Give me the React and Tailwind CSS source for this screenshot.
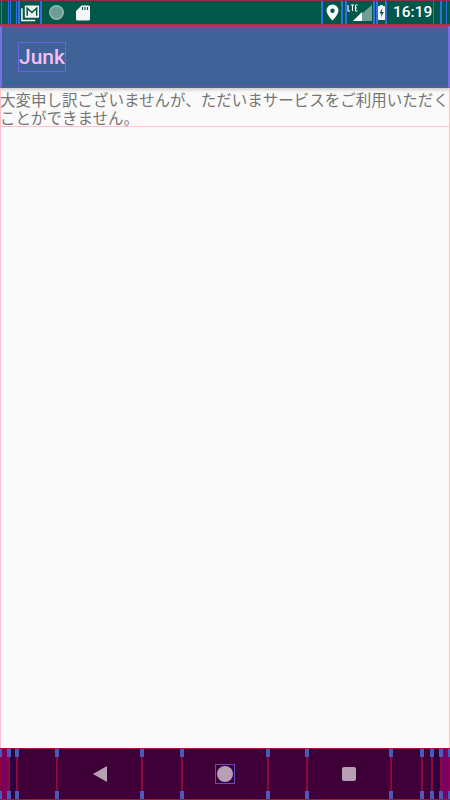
const JP = { fontFamily: '"Noto Sans CJK JP", Roboto, sans-serif' };

function Box({ className = "", children }) {
  return (
    <div className={`relative flex h-full shrink-0 items-center justify-center border-[#2f6fe0] ${className}`}>
      {children}
    </div>
  );
}

function NavCell({ className = "", children, fill = "" }) {
  return (
    <div className={`relative flex h-full shrink-0 items-center justify-center border-x border-[#8a0a3c] ${fill} ${className}`}>
      <span className="absolute -left-px top-0 h-[8px] w-[2px] bg-[#4a5ab8]" />
      <span className="absolute -left-px bottom-0 h-[8px] w-[2px] bg-[#4a5ab8]" />
      <span className="absolute -right-px top-0 h-[8px] w-[2px] bg-[#4a5ab8]" />
      <span className="absolute -right-px bottom-0 h-[8px] w-[2px] bg-[#4a5ab8]" />
      {children}
    </div>
  );
}

export default function App() {
  return (
    <div className="flex h-[800px] w-[450px] flex-col overflow-hidden bg-[#fafafa]" style={JP}>
      <header className="flex h-[26px] shrink-0 items-stretch border-b-2 border-t border-b-[#b03050] border-t-[#8a3040] bg-[#02564a] text-white">
        <Box className="ml-[1px] w-[8px] border-x" />
        <Box className="ml-[1px] w-[7px] border-x" />
        <Box className="ml-[1px] w-[24px] border-x-2">
          <svg width="19" height="18" viewBox="0 0 20 18">
            <path d="M1 4v13h14" fill="none" stroke="#f2f2f2" strokeWidth="1.6" />
            <rect x="4" y="1" width="15" height="13" rx="1" fill="#f2f2f2" />
            <path d="M6.5 12V4l5 4.500 5-4.500v8" fill="none" stroke="#02564a" strokeWidth="1.6" />
          </svg>
        </Box>
        <div className="flex flex-1 items-center pl-[7px]">
          <svg width="15" height="15" viewBox="0 0 15 15">
            <circle cx="7.500" cy="7.500" r="7.500" fill="#8fb5ad" />
            <circle cx="7.500" cy="7.500" r="5.800" fill="#6c9d94" />
          </svg>
          <svg className="ml-[12px]" width="14" height="16" viewBox="0 0 14 16">
            <path d="M5.500 0.500h7a1.500 1.500 0 0 1 1.500 1.500v12a1.500 1.500 0 0 1-1.500 1.500H1.500a1.500 1.500 0 0 1-1.500-1.500V6z" fill="#f5f5f5" />
            <path d="M6.500 2v3M9 2v3M11.500 2v3" stroke="#02564a" strokeWidth="1.200" />
          </svg>
        </div>
        <Box className="w-[22px] border-x-2">
          <svg width="13" height="17" viewBox="0 0 13 17">
            <path fillRule="evenodd" d="M6.500 0.500a6 6 0 0 1 6 6c0 4-6 10-6 10s-6-6-6-10a6 6 0 0 1 6-6zm0 4a2.200 2.200 0 1 0 0 4.400 2.200 2.200 0 0 0 0-4.400z" fill="#fff" />
          </svg>
        </Box>
        <Box className="ml-[2px] w-[30px] border-x-2">
          <svg width="26" height="18" viewBox="0 0 26 18">
            <path d="M25 1v16H6z" fill="#6f9f96" />
            <path d="M11 12v5H6z" fill="#fff" />
            <path d="M11 12l4-4v9h-4z" fill="#fff" />
            <path d="M1 1v6h2M4 1h3M5.500 1v6M8.500 1v6M8.500 1h2M8.500 4h1.500M8.500 7h2" fill="none" stroke="#fff" strokeWidth="1.100" />
          </svg>
        </Box>
        <Box className="ml-[1px] w-[11px] border-x-2">
          <svg width="7" height="15" viewBox="0 0 7 15">
            <rect x="0" y="1" width="7" height="14" rx="0.800" fill="#f5f5f5" />
            <rect x="2" y="0" width="3" height="2" fill="#f5f5f5" />
            <path d="M4.300 3L1.500 8.500h2L2.900 12.500l2.900-5.500h-2z" fill="#02564a" />
          </svg>
        </Box>
        <div className="flex w-[46px] items-center pl-[6px] text-[15.500px] font-medium" style={{ fontFamily: "Roboto, sans-serif" }}>
          16:19
        </div>
        <Box className="w-[8px] border-x" />
        <Box className="mr-[3px] w-[6px] border-x" />
      </header>

      <div className="flex h-[62px] shrink-0 items-center border-y border-x-2 border-y-[#b03a6a] border-x-[#7a6fe0] bg-[#3f6298] pl-[16px] shadow-[0_2px_3px_rgba(0,0,0,0.18)]">
        <span className="border border-[#6a63e6] text-[21px] leading-[28px] font-medium text-[#f7bdf7]" style={{ fontFamily: "Roboto, sans-serif" }}>
          Junk
        </span>
      </div>

      <p className="border-b border-[#ffc0cb] pt-[2px] text-[15.500px] leading-[18px] text-[#757575] shadow-[inset_1px_0_#ffc0cb,inset_-1px_0_#ffc0cb]">
        大変申し訳ございませんが、ただいまサービスをご利用いただくことができません。
      </p>

      <main className="flex-1 border-x border-[#ffc0cb]" />

      <nav className="flex h-[52px] shrink-0 items-stretch border-y border-[#a01a3a] bg-[#3f0038]">
        <NavCell className="w-[9px]" fill="bg-[#7b0060]" />
        <NavCell className="w-[8px]" fill="bg-[#2c0040]" />
        <NavCell className="w-[40px]" />
        <NavCell className="w-[85px]">
          <svg width="14" height="16" viewBox="0 0 14 16"><path d="M14 0v16L0 8z" fill="#b79fb5" /></svg>
        </NavCell>
        <NavCell className="w-[40px]" />
        <NavCell className="flex-1 !shrink">
          <span className="flex h-[20px] w-[20px] items-center justify-center border border-[#5a50c0]">
            <span className="h-[16px] w-[16px] rounded-full bg-[#b79fb5]" />
          </span>
        </NavCell>
        <NavCell className="w-[39px]" />
        <NavCell className="w-[84px]">
          <span className="h-[14px] w-[14px] rounded-[2px] bg-[#b79fb5]" />
        </NavCell>
        <NavCell className="w-[31px]" />
        <NavCell className="w-[10px]" />
        <NavCell className="w-[9px]" fill="bg-[#2c0040]" />
        <NavCell className="w-[9px]" fill="bg-[#7b0060]" />
      </nav>
    </div>
  );
}
